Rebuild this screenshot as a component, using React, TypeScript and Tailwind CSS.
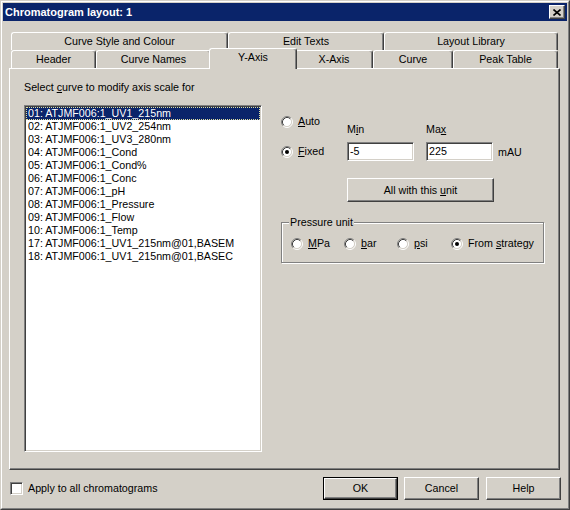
import React from 'react';

const raised =
  'border border-t-white border-l-white border-r-[#404040] border-b-[#404040] shadow-[inset_-1px_-1px_0_#808080]';
const sunken =
  'border border-t-[#808080] border-l-[#808080] border-r-white border-b-white shadow-[inset_1px_1px_0_#404040,inset_-1px_-1px_0_#d4d0c8]';

const Radio = ({ checked }: { checked?: boolean }) => (
  <svg width="12" height="12" viewBox="0 0 12 12" className="shrink-0">
    <circle cx="6" cy="6" r="4.5" fill="#fff" />
    <path d="M9.89 2.11A5.5 5.5 0 0 0 2.11 9.89" stroke="#808080" fill="none" />
    <path d="M2.11 9.89A5.5 5.5 0 0 0 9.89 2.11" stroke="#fff" fill="none" />
    <path d="M9.18 2.82A4.5 4.5 0 0 0 2.82 9.18" stroke="#404040" fill="none" />
    <path d="M2.82 9.18A4.5 4.5 0 0 0 9.18 2.82" stroke="#d4d0c8" fill="none" />
    {checked && <circle cx="6" cy="6" r="2" fill="#000" />}
  </svg>
);

const backTabs = [
  { label: 'Curve Style and Colour', w: 'w-[217px]' },
  { label: 'Edit Texts', w: 'w-[156px]' },
  { label: 'Layout Library', w: 'w-[174px]' },
];

const tabBase =
  'h-[18px] flex items-center justify-center border-t border-l border-r border-t-white border-l-white border-r-[#404040] shadow-[inset_-1px_0_0_#808080] rounded-t-[3px]';

const curves = [
  '01: ATJMF006:1_UV1_215nm',
  '02: ATJMF006:1_UV2_254nm',
  '03: ATJMF006:1_UV3_280nm',
  '04: ATJMF006:1_Cond',
  '05: ATJMF006:1_Cond%',
  '06: ATJMF006:1_Conc',
  '07: ATJMF006:1_pH',
  '08: ATJMF006:1_Pressure',
  '09: ATJMF006:1_Flow',
  '10: ATJMF006:1_Temp',
  '17: ATJMF006:1_UV1_215nm@01,BASEM',
  '18: ATJMF006:1_UV1_215nm@01,BASEC',
];

export default function App() {
  return (
    <div className="w-[570px] h-[510px] bg-[#d4d0c8] border border-t-[#d4d0c8] border-l-[#d4d0c8] border-r-[#404040] border-b-[#404040] font-['Liberation_Sans',Arial,sans-serif] text-[10.7px] leading-[13px] text-black select-none">
      <div className="h-full border border-t-white border-l-white border-r-[#808080] border-b-[#808080] p-[1px]">
        {/* title bar */}
        <div className="h-[18px] bg-[#0a246a] flex items-center pl-[2px] pr-[2px]">
          <span className="text-white font-bold text-[11px]">Chromatogram layout: 1</span>
          <div className={`ml-auto w-[16px] h-[14px] bg-[#d4d0c8] flex items-center justify-center ${raised}`}>
            <svg width="8" height="7" viewBox="0 0 8 7">
              <path d="M0.5 0.5L7.5 6.5M7.5 0.5L0.5 6.5" stroke="#000" strokeWidth="1.6" />
            </svg>
          </div>
        </div>

        {/* tabs back row */}
        <div className="flex mt-[11px] ml-[8px]">
          {backTabs.map((t) => (
            <div key={t.label} className={`${tabBase} ${t.w}`}>
              {t.label}
            </div>
          ))}
        </div>

        {/* tabs front row */}
        <div className="flex items-start h-[18px] ml-[8px]">
          <div className={`${tabBase} w-[85px]`}>Header</div>
          <div className={`${tabBase} w-[115px]`}>Curve Names</div>
          <div className="relative z-10 -mx-[2px] -mt-[2px] h-[21px] w-[88px] bg-[#d4d0c8] flex justify-center pt-[2px] border-t border-l border-r border-t-white border-l-white border-r-[#404040] shadow-[inset_-1px_0_0_#808080] rounded-t-[3px]">
            Y-Axis
          </div>
          <div className={`${tabBase} w-[78px]`}>X-Axis</div>
          <div className={`${tabBase} w-[80px]`}>Curve</div>
          <div className={`${tabBase} w-[105px]`}>Peak Table</div>
        </div>

        {/* tab panel */}
        <div className="ml-[6px] w-[551px] h-[402px] flex pt-[12px] pl-[14px] border border-t-white border-l-white border-r-[#404040] border-b-[#404040] shadow-[inset_-1px_-1px_0_#808080]">
          <div className="flex flex-col">
            <div className="h-[13px]">
              Select <span className="underline">c</span>urve to modify axis scale for
            </div>
            <div className={`mt-[11px] w-[238px] h-[347px] bg-white ${sunken} p-[1px]`}>
              {curves.map((c, i) =>
                i === 0 ? (
                  <div
                    key={c}
                    className="h-[13px] pl-[2px] bg-[#0a246a] text-white outline outline-1 outline-dotted outline-[#e0e0a0] -outline-offset-1 whitespace-nowrap"
                  >
                    {c}
                  </div>
                ) : (
                  <div key={c} className="h-[13px] pl-[2px] whitespace-nowrap">
                    {c}
                  </div>
                )
              )}
            </div>
          </div>

          <div className="ml-[19px] mt-[34px] flex flex-col">
            <div className="flex">
              <div className="w-[66px] flex flex-col">
                <div className="h-[13px] flex items-center gap-[5px]">
                  <Radio />
                  <span>
                    <span className="underline">A</span>uto
                  </span>
                </div>
                <div className="mt-[17px] h-[13px] flex items-center gap-[5px]">
                  <Radio checked />
                  <span>
                    <span className="underline">F</span>ixed
                  </span>
                </div>
              </div>
              <div className="w-[67px] flex flex-col">
                <div className="mt-[8px] h-[13px]">
                  M<span className="underline">i</span>n
                </div>
                <div className={`mt-[6px] h-[19px] bg-white ${sunken} pl-[2px] flex items-center`}>-5</div>
              </div>
              <div className="ml-[12px] w-[67px] flex flex-col">
                <div className="mt-[8px] h-[13px]">
                  Ma<span className="underline">x</span>
                </div>
                <div className={`mt-[6px] h-[19px] bg-white ${sunken} pl-[2px] flex items-center`}>225</div>
              </div>
              <div className="ml-[5px] mt-[31px] h-[13px]">mAU</div>
            </div>

            <div className={`mt-[17px] ml-[66px] w-[147px] h-[24px] flex items-center justify-center ${raised}`}>
              <span>
                All with this <span className="underline">u</span>nit
              </span>
            </div>

            <fieldset className="mt-[14px] w-[263px] h-[47px] border border-[#808080] shadow-[inset_1px_1px_0_#fff,1px_1px_0_#fff] pl-[9px] pr-0">
              <legend className="ml-[-2px] px-[1px] bg-[#d4d0c8] h-[13px]">Pressure unit</legend>
              <div className="flex mt-[8px] whitespace-nowrap">
                <div className="w-[53px] flex items-center gap-[5px]">
                  <Radio />
                  <span>
                    <span className="underline">M</span>Pa
                  </span>
                </div>
                <div className="w-[53px] flex items-center gap-[5px]">
                  <Radio />
                  <span>
                    <span className="underline">b</span>ar
                  </span>
                </div>
                <div className="w-[54px] flex items-center gap-[5px]">
                  <Radio />
                  <span>
                    <span className="underline">p</span>si
                  </span>
                </div>
                <div className="flex items-center gap-[5px] shrink-0">
                  <Radio checked />
                  <span className="whitespace-nowrap">
                    From <span className="underline">s</span>trategy
                  </span>
                </div>
              </div>
            </fieldset>
          </div>
        </div>

        {/* bottom row */}
        <div className="flex items-center mt-[7px] h-[23px]">
          <div className={`ml-[7px] w-[13px] h-[13px] bg-white ${sunken}`} />
          <span className="ml-[5px]">Apply to all chromatograms</span>
          <div className="ml-auto mr-[6px] flex">
            <div className="w-[75px] h-[23px] border border-black">
              <div className={`h-full flex items-center justify-center ${raised}`}>OK</div>
            </div>
            <div className={`ml-[6px] w-[75px] h-[23px] flex items-center justify-center ${raised}`}>Cancel</div>
            <div className={`ml-[7px] w-[75px] h-[23px] flex items-center justify-center ${raised}`}>Help</div>
          </div>
        </div>
      </div>
    </div>
  );
}
